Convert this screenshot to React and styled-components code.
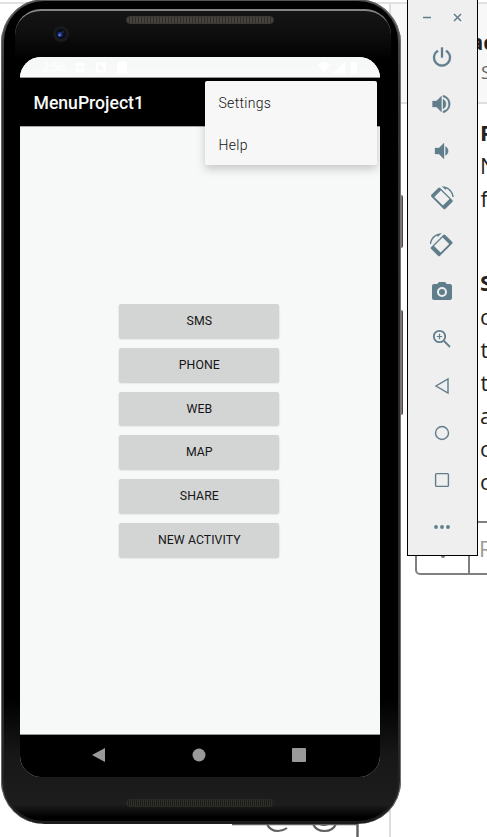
import React from "react";
import styled, { createGlobalStyle } from "styled-components";

const Global = createGlobalStyle`
  * { box-sizing: border-box; }
  body { margin: 0; background: #fff; overflow: hidden; font-family: Roboto, sans-serif; }
`;
const Desktop = styled.main`
  position: relative; width: 487px; height: 837px; overflow: hidden; background: #fff;
`;
const Page = styled.section`
  width: 487px; height: 837px; padding-top: 2px;
`;
const PageBody = styled.div`
  margin-left: 389px; height: 835px; border-left: 2px solid #dedede;
`;
const TopRule = styled.div`height: 2px; background: #e2e2e2;`;
const PageHeader = styled.header`
  height: 100px; background: #f8f8f8; border-bottom: 2px solid #dedede;
`;
const Copy = styled.span`
  position: absolute; left: ${p => p.$x}px; top: ${p => p.$y}px;
  font: ${p => p.$bold ? 700 : 400} ${p => p.$size || 22}px/30px "Open Sans", sans-serif;
  color: ${p => p.$color || "#222"}; white-space: nowrap;
`;
const Composer = styled.div`
  position: absolute; left: 415px; top: 521px; width: 100px; height: 54px;
  border: 2px solid #808080; border-radius: 5px; display: flex;
`;
const ComposerButton = styled.div`
  width: 53px; border-right: 2px solid #808080; display: flex; justify-content: center; padding-top: 32px;
`;
const PageIcons = styled.svg`position: absolute; left: 232px; top: 815px;`;

const SideKey = styled.i`
  position: absolute; left: 399px; top: ${p => p.$top}px; width: 4px; height: ${p => p.$height}px;
  border-radius: 0 2px 2px 0; background: linear-gradient(90deg, #555, #887d7b 60%, #302d2d);
`;
const Phone = styled.section`
  position: absolute; left: 0.5px; top: -1px; width: 400px; height: 825px;
  border-radius: 44px 44px 43px 43px;
  background: linear-gradient(#555, #303030 12%, #292929 90%, #1c1c1c);
  padding: 2px 3px 3px 3.5px;
  box-shadow: inset 1px 0 #686868, inset -1px 0 #707070;
`;
const Frame = styled.div`
  height: 820px; border-radius: 40px; background: linear-gradient(#000 0 85%, #171717 92%, #1d1d1d 98%, #000 99.5%);
  display: flex; flex-direction: column; padding: 8px 12px 0 16px;
`;
const Bezel = styled.div`
  height: 48px; flex: none; margin: 0 -5px; border-top: 2px solid #858585; border-radius: 26px 26px 0 0;
  background: linear-gradient(#151515, #0d0d0d 55%, #020202);
`;
const Camera = styled.svg`position: absolute; left: 51px; top: 26px;`;
const Speaker = styled.div`
  width: 148px; height: 8px; border: 1px solid ${p => p.$bottom ? "#292925" : "#373533"}; border-radius: 5px;
  background: repeating-linear-gradient(90deg, #30302b 0 1px, #1b1b19 1px 2px);
`;
const TopSpeaker = styled(Speaker)`
  margin: 5px 0 0 111px; border-color: #3b3936;
  background: repeating-linear-gradient(90deg, #46413b 0 2px, #312e2a 2px 3px);
`;
const Screen = styled.div`
  width: 360px; height: 720px; border-radius: 21px; overflow: hidden; background: #f6f9f8;
  display: flex; flex-direction: column; flex: none;
`;
const StatusBar = styled.div`
  height: 21px; border-bottom: 1px solid #999; color: #fff; background: linear-gradient(#f5f8f7, #f9faf9);
  display: flex; justify-content: space-between; padding: 4px 20px 4px 22px; font-size: 12px; line-height: 13px;
`;
const StatusSide = styled.div`display: flex; gap: ${p => p.$gap}px;`;
const AppBar = styled.header`
  height: 48px; background: #000; color: #fafafa; padding-left: 13.5px; font: 500 17.6px/50px Roboto, sans-serif;
`;
const Activity = styled.div`
  height: 609px; border-top: 1px solid #aaa; border-bottom: 1px solid #929999;
  padding: 177px 0 0 99.3px; display: flex; flex-direction: column; gap: 10px;
`;
const ActionButton = styled.button`
  width: 160px; height: 33.8px; flex: none; padding: 0; border: 0; border-radius: 2px; background: #d3d5d4;
  box-shadow: 0 1px 2px #0003; color: #161616; font: 400 12.3px/35px Roboto, sans-serif; letter-spacing: .05px;
`;
const NavBar = styled.nav`
  height: 42px; background: #000; display: flex; justify-content: space-between; padding: 0 74px 2px 72px; align-items: center;
`;
const BottomBezel = styled.div`height: 30px; padding: 22px 0 0 106px;`;
const Menu = styled.div`
  position: absolute; left: 204.5px; top: 81px; width: 172px; height: 84px; background: #f7f7f7;
  border-radius: 2px; box-shadow: 0 4px 10px #0003; display: grid; grid-template-rows: 42px 42px;
`;
const MenuItem = styled.div`
  padding-left: 14px; color: #111; font: 300 14px/44px Roboto, sans-serif; letter-spacing: .3px;
`;
const Toolbar = styled.aside`
  position: absolute; left: 407px; top: -2px; width: 71px; height: 558px; background: #efefef; border: 1px solid #000;
  display: flex; flex-direction: column; align-items: center; color: #607d8b; padding-right: 1px;
`;
const WindowControls = styled.div`display: flex; gap: 16px; margin: 11px 0 9px; height: 14px;`;
const ToolButton = styled.div`height: 47px; display: grid; place-items: center;`;
const Icon = styled.svg`width: 24px; height: 24px; display: block; fill: currentColor;`;
const StatusIcon = styled.svg`width: 12px; height: 13px; fill: #fff;`;

const RotateShape = () => <>
  <path fillRule="evenodd" d="M10.3 1.9a1.5 1.5 0 0 0-2.1 0L1.4 8.7a1.5 1.5 0 0 0 0 2.1l12 12a1.5 1.5 0 0 0 2.1 0l6.8-6.8a1.5 1.5 0 0 0 0-2.1zM4.3 11l6.6-6.6 8.6 8.6-6.6 6.6z"/>
  <path d="M11.7.2 15.8 3.9 16.4 2.5C19.7 4 22 7.2 22.4 11h1.4C23.2 4.7 18 0 11.7.2z"/>
</>;
const tools = [
  ["power", <path d="M11 2.5h2v10h-2zM16.8 5l-1.4 1.4A7 7 0 1 1 8.6 6.4L7.2 5A9 9 0 1 0 16.8 5Z" stroke="currentColor" strokeWidth=".3" />],
  ["volume up", <path d="M2.5 9v6h4l5 5V4l-5 5zm10.5-2v10c2-1 3-3 3-5s-1-4-3-5zm0-4v2a7.2 7.2 0 0 1 0 14v2a9.2 9.2 0 0 0 0-18z" stroke="currentColor" strokeWidth=".3" />],
  ["volume down", <path d="M5 9v6h4l5 5V4L9 9zm10.5-1.5v9c1.8-1 2.7-2.7 2.7-4.5s-.9-3.5-2.7-4.5z" stroke="currentColor" strokeWidth=".3" />],
  ["rotate left", <RotateShape />],
  ["rotate right", <g transform="matrix(-1 0 0 1 23.5 0)"><RotateShape /></g>],
  ["camera", <path fillRule="evenodd" d="M9 2 7.2 4H4a2 2 0 0 0-2 2v12a2 2 0 0 0 2 2h16a2 2 0 0 0 2-2V6a2 2 0 0 0-2-2h-3.2L15 2zm3 5a5 5 0 1 1 0 10 5 5 0 0 1 0-10zm0 2a3 3 0 1 0 0 6 3 3 0 0 0 0-6z" />],
  ["zoom", <g fill="none" stroke="currentColor" strokeWidth="1.8"><circle cx="9.5" cy="9.5" r="5.7"/><path d="m14 14 6 6"/><path d="M6.8 9.5h5.4M9.5 6.8v5.4" strokeWidth="1.2"/></g>],
  ["back", <path d="M18 5v14L6 12z" fill="none" stroke="currentColor" strokeWidth="1.4" />],
  ["home", <circle cx="12" cy="12" r="6.5" fill="none" stroke="currentColor" strokeWidth="1.4" />],
  ["overview", <rect x="5.6" y="5.6" width="12.8" height="12.8" rx="1" fill="none" stroke="currentColor" strokeWidth="1.4" />],
  ["more", <g><circle cx="6" cy="12" r="1.9"/><circle cx="12" cy="12" r="1.9"/><circle cx="18" cy="12" r="1.9"/></g>]
];
const copy = [
  ["ac", 470, 26, 22, true], ["S", 481, 57, 19, false, "#666"], ["P", 480, 117, 22, true], ["N", 480, 150], ["f", 480.5, 183],
  ["S", 480, 267, 22, true], ["o", 480, 301], ["t", 480.5, 334], ["t", 480.5, 367], ["a", 480, 400], ["o", 480, 433], ["o", 480, 466], ["R", 479, 533, 22, false, "#999"]
];
const actions = ["SMS", "PHONE", "WEB", "MAP", "SHARE", "NEW ACTIVITY"];

export default function App() {
  return <><Global /><Desktop>
    <Page><TopRule /><PageBody><PageHeader /></PageBody></Page>
    {copy.map(([text, x, y, size, bold, color], i) => <Copy key={i} $x={x} $y={y} $size={size} $bold={bold} $color={color}>{text}</Copy>)}
    <Composer><ComposerButton><svg width="6" height="4"><circle cx="3" cy="1" r="2" fill="#777"/></svg></ComposerButton></Composer>
    <PageIcons width="130" height="22" fill="none" stroke="#606060" strokeWidth="2">
      <path d="M0 9h125.5v13" strokeWidth="2.4"/><path d="M35 9q3 7 11 7 5 0 9-3"/><path d="M81 9q3 7 11.5 7T104 9"/><path d="M88 9q4 2 8 0"/>
    </PageIcons>
    <SideKey $top={195} $height={53} /><SideKey $top={310} $height={105} />
    <Phone><Frame>
      <Bezel><TopSpeaker /></Bezel>
      <Screen>
        <StatusBar>
          <StatusSide $gap={9}><span>2:56</span>
            <StatusIcon viewBox="0 0 12 12"><path fillRule="evenodd" d="M5 0h2l.5 2 2-.7 1.4 2L9.5 5v2l1.4 1.5-1.4 2-2-.5L7 12H5l-.6-2-2 .5-1.3-2L2.5 7V5L1 3.3l1.4-2 2 .7zM6 4a2 2 0 1 0 0 4 2 2 0 0 0 0-4z"/></StatusIcon>
            <StatusIcon viewBox="0 0 12 12"><path fillRule="evenodd" d="M1 1h10v10H1zm2 2v6h6V7L5 3z"/></StatusIcon>
            <StatusIcon viewBox="0 0 12 12"><path d="M4 0h7v12H1V3z"/></StatusIcon>
          </StatusSide>
          <StatusSide $gap={3}>
            <StatusIcon viewBox="0 0 12 12"><path d="M0 3q6-5 12 0L6 11z"/></StatusIcon>
            <StatusIcon viewBox="0 0 12 12"><path d="M12 0v12H0z"/></StatusIcon>
            <StatusIcon viewBox="0 0 12 12"><path d="M3 1h2V0h2v1h2v11H3z"/></StatusIcon>
          </StatusSide>
        </StatusBar>
        <AppBar>MenuProject1</AppBar>
        <Activity>{actions.map(t => <ActionButton key={t}>{t}</ActionButton>)}</Activity>
        <NavBar>
          <svg width="14" height="16" fill="#999"><path d="M13 1v14L0 8z"/></svg>
          <svg width="14" height="14" fill="#999"><circle cx="7" cy="7" r="6.5"/></svg>
          <svg width="14" height="14" fill="#999"><rect width="14" height="14" rx="1"/></svg>
        </NavBar>
      </Screen>
      <BottomBezel><Speaker $bottom /></BottomBezel>
    </Frame>
    <Camera width="18" height="18"><circle cx="9" cy="9" r="8" fill="#191a1c"/><circle cx="9" cy="9" r="5" fill="#090d1b"/><circle cx="8" cy="9.5" r="2.5" fill="#243788"/><circle cx="7.5" cy="10" r="1" fill="#7888e3"/><circle cx="11" cy="7" r=".8" fill="#354279"/></Camera>
    </Phone>
    <Menu><MenuItem>Settings</MenuItem><MenuItem>Help</MenuItem></Menu>
    <Toolbar>
      <WindowControls>
        <svg width="14" height="14" stroke="currentColor" strokeWidth="1.5"><path d="M3 7.5h8"/></svg>
        <svg width="14" height="14" stroke="currentColor" strokeWidth="1.5"><path d="m4 4 7 7M11 4l-7 7"/></svg>
      </WindowControls>
      {tools.map(([name, icon]) => <ToolButton key={name}><Icon viewBox="0 0 24 24">{icon}</Icon></ToolButton>)}
    </Toolbar>
  </Desktop></>;
}
